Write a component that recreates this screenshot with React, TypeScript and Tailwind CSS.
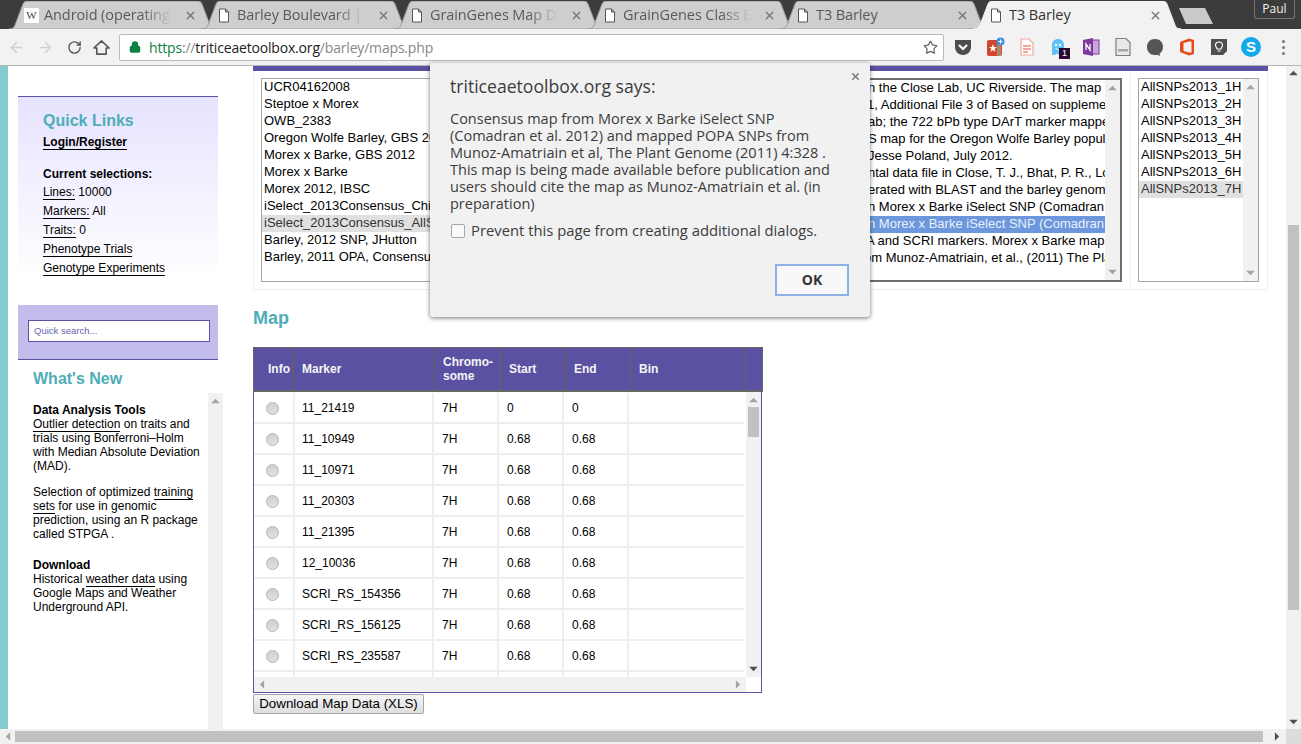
import { ArrowLeft, ArrowRight, RotateCw, Star, X, Lock } from 'lucide-react';

const tabs = [
  { title: 'Android (operating system)', wiki: true },
  { title: 'Barley Boulevard | Genome' },
  { title: 'GrainGenes Map Data' },
  { title: 'GrainGenes Class Browser' },
  { title: 'T3 Barley' },
  { title: 'T3 Barley', active: true },
];

const leftRows = [
  'UCR04162008',
  'Steptoe x Morex',
  'OWB_2383',
  'Oregon Wolfe Barley, GBS 2012',
  'Morex x Barke, GBS 2012',
  'Morex x Barke',
  'Morex 2012, IBSC',
  'iSelect_2013Consensus_Chinese',
  'iSelect_2013Consensus_AllSNPs',
  'Barley, 2012 SNP, JHutton',
  'Barley, 2011 OPA, Consensus',
];

// only the part to the right of the dialog shows, so each row starts where the dialog ends
const middleRows = [
  ['n the Close Lab, UC Riverside. The map is', 'pl-[367px]'],
  ['1, Additional File 3 of Based on supplementary', 'pl-[366px]'],
  ['ab; the 722 bPb type DArT marker mapped', 'pl-[367px]'],
  ['S map for the Oregon Wolfe Barley population', 'pl-[367px]'],
  ['Jesse Poland, July 2012.', 'pl-[367px]'],
  ['ntal data file in Close, T. J., Bhat, P. R., Lonardi', 'pl-[367px]'],
  ['erated with BLAST and the barley genome', 'pl-[367px]'],
  ['n Morex x Barke iSelect SNP (Comadran et al.', 'pl-[367px]'],
  ['n Morex x Barke iSelect SNP (Comadran et al.', 'pl-[367px]'],
  ['A and SCRI markers. Morex x Barke map', 'pl-[365px]'],
  ['om Munoz-Amatriain, et al., (2011) The Plant', 'pl-[363px]'],
];

const markers = [
  ['11_21419', '7H', '0', '0'],
  ['11_10949', '7H', '0.68', '0.68'],
  ['11_10971', '7H', '0.68', '0.68'],
  ['11_20303', '7H', '0.68', '0.68'],
  ['11_21395', '7H', '0.68', '0.68'],
  ['12_10036', '7H', '0.68', '0.68'],
  ['SCRI_RS_154356', '7H', '0.68', '0.68'],
  ['SCRI_RS_156125', '7H', '0.68', '0.68'],
  ['SCRI_RS_235587', '7H', '0.68', '0.68'],
  ['', '', '', ''],
];

function Arrow({ dir, color = '#a3a3a3' }: { dir: 'up' | 'down' | 'left' | 'right'; color?: string }) {
  const pts = { up: '0,6 5,1 10,6', down: '0,1 10,1 5,6', left: '6,0 6,10 1,5', right: '1,0 1,10 6,5' }[dir];
  const size = dir === 'up' || dir === 'down' ? 'w-[9px] h-[6px]' : 'w-[6px] h-[9px]';
  const box = dir === 'up' || dir === 'down' ? '0 0 10 7' : '0 0 7 10';
  return (
    <svg viewBox={box} className={size}>
      <polygon points={pts} fill={color} />
    </svg>
  );
}

function FileIcon() {
  return (
    <svg viewBox="0 0 12 15" className="w-[12px] h-[15px] shrink-0">
      <path d="M1.5 1 H7.5 L10.5 4 V14 H1.5 Z M7.5 1 V4 H10.5" fill="#fff" stroke="#555" strokeWidth="1" />
    </svg>
  );
}

function Tab({ title, wiki, active, first }: { title: string; wiki?: boolean; active?: boolean; first?: boolean }) {
  return (
    <div className={`relative w-[207px] h-[28px] shrink-0 flex items-center ${first ? 'ml-[9px]' : '-ml-[14px]'} ${active ? 'z-10' : ''}`}>
      <svg viewBox="0 0 207 28" className="absolute inset-0 w-[207px] h-[28px]">
        <path
          d="M0 28 C4 28 5 26 6 24 L14 3 C15 1 16 0 18 0 H189 C191 0 192 1 193 3 L201 24 C202 26 203 28 207 28 Z"
          fill={active ? '#f2f2f2' : '#cecece'}
          stroke={active ? '#f2f2f2' : '#9a9a9a'}
          strokeWidth="1"
        />
      </svg>
      <div className="relative flex items-center w-full pl-[15px] pr-[19px]">
        {wiki ? (
          <div className="w-[15px] h-[15px] shrink-0 bg-white text-[#444] text-[11px] leading-[15px] text-center font-['Liberation_Serif',serif]">W</div>
        ) : (
          <div className="w-[15px] shrink-0 flex justify-start pl-[1px]"><FileIcon /></div>
        )}
        <div
          className={`ml-[5px] flex-1 overflow-hidden whitespace-nowrap text-[14.5px] tracking-[-0.1px] ${active ? 'text-[#333]' : 'text-[#5a5a5a]'} ${active || title === 'T3 Barley' ? '' : '[mask-image:linear-gradient(to_right,black_72%,transparent_94%)]'}`}
        >
          {title}
        </div>
        <X size={13} strokeWidth={2.5} className="shrink-0 ml-[4px] text-[#777]" />
      </div>
    </div>
  );
}

function ExtensionIcons() {
  return (
    <div className="flex items-center gap-[12px] ml-[9px]">
      <svg viewBox="0 0 20 20" className="w-[20px] h-[20px]">
        <path d="M2 3 H18 V10 C18 15 14 18 10 18 C6 18 2 15 2 10 Z" fill="#4c4c4c" />
        <path d="M6 8 L10 12 L14 8" fill="none" stroke="#fff" strokeWidth="2.2" />
      </svg>
      <svg viewBox="0 0 20 20" className="w-[20px] h-[20px]">
        <rect x="2" y="3" width="15" height="16" rx="2" fill="#d4462e" />
        <rect x="12" y="3" width="4" height="16" fill="#a98a6a" />
        <path d="M8 7 L9 10 L12 10 L9.6 12 L10.5 15 L8 13 L5.5 15 L6.4 12 L4 10 L7 10 Z" fill="#fff" />
        <circle cx="15.5" cy="4.5" r="4" fill="#3d8fe0" />
        <path d="M13.5 4.5 H17.5 M15.5 2.5 V6.5" stroke="#fff" strokeWidth="1.2" />
      </svg>
      <svg viewBox="0 0 20 20" className="w-[20px] h-[20px]">
        <path d="M4 2 H12 L16 6 V18 H4 Z" fill="#fff" stroke="#f4a79e" strokeWidth="1.2" />
        <path d="M6 9 H14 M6 12 H14 M6 15 H11" stroke="#f28b80" strokeWidth="1.4" />
      </svg>
      <div className="relative w-[20px] h-[20px]">
        <svg viewBox="0 0 20 20" className="w-[20px] h-[20px]">
          <path d="M3 18 V8 C3 4 6 2 9 2 C12 2 15 4 15 8 V18 L12.5 16.5 L10.5 18 L8 16.5 L5.5 18 Z" fill="#5cc4f2" />
          <circle cx="7" cy="8" r="1.2" fill="#fff" />
          <circle cx="11" cy="8" r="1.2" fill="#fff" />
          <path d="M6.5 11 C8 13 10 13 11.5 11" stroke="#fff" fill="none" />
        </svg>
        <div className="absolute left-[10px] top-[11px] w-[11px] h-[11px] bg-[#2a0a33] text-white text-[9px] leading-[11px] text-center font-['Liberation_Sans',sans-serif]">1</div>
      </div>
      <svg viewBox="0 0 20 20" className="w-[20px] h-[20px]">
        <rect x="9" y="3" width="9" height="14" fill="#c9a6dc" stroke="#7a3a9e" />
        <path d="M2 3 L12 1 V19 L2 17 Z" fill="#7a3a9e" />
        <path d="M5 13 V7 L9 13 V7" fill="none" stroke="#fff" strokeWidth="1.3" />
      </svg>
      <svg viewBox="0 0 20 20" className="w-[20px] h-[20px]">
        <path d="M3 1.5 H13 L17 5.5 V18.5 H3 Z" fill="#e8e8e8" stroke="#7d7d7d" strokeWidth="1.2" />
        <rect x="5" y="12" width="10" height="2.5" fill="#a5a5a5" />
      </svg>
      <svg viewBox="0 0 20 20" className="w-[20px] h-[20px]">
        <path d="M10 2 C15 2 18 5.5 18 10 C18 13 16.5 15.5 14.5 16.8 L15 19 L12 17.7 C11.3 17.9 10.7 18 10 18 C5 18 2 14.5 2 10 C2 5.5 5 2 10 2 Z" fill="#555" />
      </svg>
      <svg viewBox="0 0 20 20" className="w-[20px] h-[20px]">
        <path d="M3 5 L12 1.5 L17 3 V17 L12 18.5 L3 15 Z" fill="#e64a19" />
        <path d="M6.5 6 L12 4.5 V15.5 L6.5 14 Z" fill="#f2f2f2" />
        <path d="M12 4.5 H14.5 V15.5 H12 Z" fill="#f2f2f2" />
      </svg>
      <svg viewBox="0 0 20 20" className="w-[20px] h-[20px]">
        <path d="M2 2 H18 V14 L14 18 H2 Z" fill="#4f4f4f" />
        <path d="M10 5 C12 5 13.5 6.5 13.5 8.3 C13.5 10 12 10.5 12 12 H8 C8 10.5 6.5 10 6.5 8.3 C6.5 6.5 8 5 10 5 Z M8.5 14 H11.5" fill="none" stroke="#fff" strokeWidth="1.2" />
      </svg>
      <div className="w-[20px] h-[20px] rounded-full bg-[#12a9e8] text-white text-[15px] font-bold leading-[20px] text-center font-['Liberation_Sans',sans-serif]">S</div>
      <div className="flex flex-col gap-[3px] ml-[9px]">
        <div className="w-[3px] h-[3px] rounded-full bg-[#777]" />
        <div className="w-[3px] h-[3px] rounded-full bg-[#777]" />
        <div className="w-[3px] h-[3px] rounded-full bg-[#777]" />
      </div>
    </div>
  );
}

function ListScrollbar() {
  return (
    <div className="w-[15px] shrink-0 bg-[#f1f1f1] flex flex-col items-center justify-between py-[5px]">
      <Arrow dir="up" />
      <Arrow dir="down" />
    </div>
  );
}

function Sidebar() {
  const link = 'border-b border-black leading-[14px] inline-block';
  return (
    <div className="w-[215px] shrink-0 pt-[30px] pl-[10px] flex flex-col text-[12px] text-black">
      <div className="w-[200px] h-[184px] border-t border-[#5b51a5] bg-gradient-to-b from-[#e6e3fe] to-white pl-[25px] pt-[15px]">
        <div className="text-[16px] font-bold text-[#4fadb8] leading-[18px]">Quick Links</div>
        <div className="mt-[3px] h-[19px] font-bold"><span className={link}>Login/Register</span></div>
        <div className="mt-[13px] font-bold leading-[18px]">Current selections:</div>
        <div className="leading-[19px]"><span className={link}>Lines:</span> 10000</div>
        <div className="leading-[19px]"><span className={link}>Markers:</span> All</div>
        <div className="leading-[19px]"><span className={link}>Traits:</span> 0</div>
        <div className="leading-[19px]"><span className={link}>Phenotype Trials</span></div>
        <div className="leading-[19px]"><span className={link}>Genotype Experiments</span></div>
      </div>
      <div className="mt-[25px] w-[200px] h-[55px] bg-[#c3bdeb] border-b border-[#5b51a5] pl-[10px] pt-[15px]">
        <div className="w-[182px] h-[22px] bg-white border border-[#5b51a5] text-[9.5px] leading-[20px] pl-[5px] text-[#6a5fb0]">Quick search...</div>
      </div>
      <div className="mt-[10px] pl-[15px] text-[16px] font-bold text-[#4fadb8] leading-[18px]">What's New</div>
      <div className="flex-1 flex mt-[5px] min-h-0 pl-[15px]">
        <div className="w-[175px] shrink-0 leading-[14px] pt-[10px]">
          <div className="font-bold">Data Analysis Tools</div>
          <div><span className="border-b border-black">Outlier detection</span> on traits and trials using Bonferroni–Holm with Median Absolute Deviation (MAD).</div>
          <div className="mt-[12px]">Selection of optimized <span className="border-b border-black">training sets</span> for use in genomic prediction, using an R package called STPGA .</div>
          <div className="mt-[17px] font-bold">Download</div>
          <div>Historical <span className="border-b border-black">weather data</span> using Google Maps and Weather Underground API.</div>
        </div>
        <div className="w-[15px] shrink-0 bg-[#f1f1f1] flex justify-center pt-[5px]"><Arrow dir="up" /></div>
      </div>
    </div>
  );
}

function MapTable() {
  const head = 'h-full flex items-center border-r border-[#666648] pl-[8px] shrink-0';
  const cell = 'h-full flex items-center border-r-2 border-[#eeeeee] shrink-0';
  return (
    <div className="mt-[18px] w-[510px] flex flex-col text-[12px]">
      <div className="h-[45px] bg-[#5b51a3] border border-[#666] border-b-2 flex text-[#f4f4f4] font-bold leading-[14px]">
        <div className={`${head} w-[40px] justify-end !pl-0 pr-[3px]`}>Info</div>
        <div className={`${head} w-[141px]`}>Marker</div>
        <div className={`${head} w-[66px]`}>Chromo-<br />some</div>
        <div className={`${head} w-[65px]`}>Start</div>
        <div className={`${head} w-[65px]`}>End</div>
        <div className={`${head} w-[115px]`}>Bin</div>
      </div>
      <div className="w-[509px] border border-t-0 border-[#5b51a5] flex flex-col">
        <div className="flex h-[285px]">
          <div className="w-[490px] overflow-hidden pt-[1px]">
            {markers.map((row, i) => (
              <div key={i} className="h-[31px] flex border-b-2 border-[#eeeeee] text-black">
                <div className="w-[41px] h-full border-r-2 border-[#eeeeee] shrink-0 flex items-center justify-center pr-[3px] pt-[2px]">
                  {i < 9 && <div className="w-[13px] h-[13px] rounded-full border border-[#b4b4b4] bg-gradient-to-b from-[#cfcfcf] to-[#e2e2e2]" />}
                </div>
                <div className={`${cell} w-[139px] pl-[7px]`}>{row[0]}</div>
                <div className={`${cell} w-[65px] pl-[8px]`}>{row[1]}</div>
                <div className={`${cell} w-[65px] pl-[8px]`}>{row[2]}</div>
                <div className={`${cell} w-[65px] pl-[8px]`}>{row[3]}</div>
                <div className="flex-1" />
              </div>
            ))}
          </div>
          <div className="w-[2px] bg-white" />
          <div className="w-[15px] bg-[#f1f1f1] flex flex-col items-center justify-between py-[5px]">
            <div className="flex flex-col items-center">
              <Arrow dir="up" />
              <div className="mt-[4px] w-[11px] h-[30px] bg-[#c1c1c1]" />
            </div>
            <Arrow dir="down" color="#505050" />
          </div>
        </div>
        <div className="h-[15px] flex">
          <div className="w-[492px] bg-[#f1f1f1] flex items-center justify-between px-[5px]">
            <Arrow dir="left" />
            <Arrow dir="right" />
          </div>
        </div>
      </div>
      <button className="mt-[1px] w-[171px] h-[20px] bg-gradient-to-b from-[#f4f4f4] to-[#dedede] border border-[#a6a6a6] rounded-[2px] text-[13.33px] leading-[18px] text-black text-center">
        Download Map Data (XLS)
      </button>
    </div>
  );
}

function AlertDialog() {
  return (
    <div className="absolute left-[430px] top-[63px] w-[440px] h-[254px] bg-[#f1f1f1] rounded-[3px] shadow-[0_1px_4px_rgba(0,0,0,0.55)] text-[#3c3c3c] font-['Open_Sans',sans-serif] pl-[20px] z-20">
      <X size={11} strokeWidth={3} className="absolute right-[9px] top-[8px] text-[#777]" />
      <div className="pt-[11px] text-[17.6px] leading-[24px]">triticeaetoolbox.org says:</div>
      <div className="mt-[12px] w-[410px] text-[14.5px] leading-[17px] whitespace-nowrap">
        Consensus map from Morex x Barke iSelect SNP<br />
        (Comadran et al. 2012) and mapped POPA SNPs from<br />
        Munoz-Amatriain et al, The Plant Genome (2011) 4:328 .<br />
        This map is being made available before publication and<br />
        users should cite the map as Munoz-Amatriain et al. (in<br />
        preparation)
      </div>
      <div className="mt-[10px] flex items-center h-[17px]">
        <div className="ml-[1px] w-[14px] h-[14px] rounded-[2px] border border-[#a8a8a8] bg-[#fafafa]" />
        <div className="ml-[6px] text-[14.8px]">Prevent this page from creating additional dialogs.</div>
      </div>
      <div className="mt-[25px] mr-[21px] flex justify-end">
        <div className="w-[74px] h-[32px] bg-[#f8f8f8] border-2 border-[#8fb0e6] text-[14px] font-bold leading-[28px] text-center text-[#333]">OK</div>
      </div>
    </div>
  );
}

export default function App() {
  return (
    <div className="relative w-[1301px] h-[744px] overflow-hidden flex flex-col bg-white font-['Liberation_Sans',Arial,sans-serif]">
      <div className="h-[29px] shrink-0 bg-[#3c3c3c] flex pt-[1px] font-['Open_Sans',sans-serif] relative">
        {tabs.map((t, i) => (
          <Tab key={i} title={t.title} wiki={t.wiki} active={t.active} first={i === 0} />
        ))}
        <svg viewBox="0 0 36 16" className="ml-[-3px] mt-[7px] w-[36px] h-[16px] shrink-0">
          <path d="M1 0 H27 L35 16 H8 Z" fill="#cacaca" />
        </svg>
        <div className="absolute right-[6px] top-0 w-[41px] h-[19px] border border-t-0 border-[#777] rounded-b-[3px] text-[#eee] text-[12px] leading-[18px] text-center">Paul</div>
      </div>

      <div className="h-[37px] shrink-0 bg-[#f2f2f2] border-b border-[#b5b5b5] flex items-center font-['Open_Sans',sans-serif]">
        <ArrowLeft size={17} strokeWidth={2} className="ml-[8px] text-[#cfcfcf]" />
        <ArrowRight size={17} strokeWidth={2} className="ml-[12px] text-[#cfcfcf]" />
        <RotateCw size={15} strokeWidth={2.2} className="ml-[13px] text-[#555]" />
        <svg viewBox="0 0 18 18" className="ml-[11px] w-[17px] h-[17px]">
          <path d="M9 2 L17 9.5 H14 V16 H4 V9.5 H1 Z" fill="none" stroke="#555" strokeWidth="1.7" strokeLinejoin="round" />
        </svg>
        <div className="ml-[9px] w-[825px] h-[27px] bg-white border border-[#bbbbbb] rounded-[2px] flex items-center pl-[9px] pr-[5px]">
          <Lock size={12} strokeWidth={3} className="text-[#0b8043] fill-[#0b8043]" />
          <div className="ml-[8px] flex-1 text-[14px] tracking-[-0.18px] whitespace-nowrap text-[#888]">
            <span className="text-[#0b8043]">https</span>://<span className="text-[#222]">triticeaetoolbox.org</span>/barley/maps.php
          </div>
          <Star size={15} strokeWidth={2} className="text-[#666]" />
        </div>
        <ExtensionIcons />
      </div>

      <div className="flex-1 min-h-0 flex">
        <div className="w-[8px] shrink-0 bg-[#86cbd0]" />
        <Sidebar />
        <div className="ml-[30px] w-[1015px] shrink-0 flex flex-col">
          <div className="h-[224px] shrink-0 border-t-[5px] border-[#5b51a5] flex flex-col">
            <div className="h-[219px] border border-t-0 border-[#eeeeee] flex text-[13px] text-black">
              <div className="flex-1 min-w-0 pl-[7px] pt-[7px] pb-[7px] flex">
                <div className="w-[240px] shrink-0 border border-[#a6a6a6] border-r-0 overflow-hidden">
                  {leftRows.map((r, i) => (
                    <div key={i} className={`h-[17px] leading-[16px] pl-[2px] whitespace-nowrap ${i === 8 ? 'bg-[#e0e0e0] text-[#333]' : ''}`}>{r}</div>
                  ))}
                </div>
                <div className="flex-1 min-w-0 flex border-2 border-[#6e6e6e] border-l-0 rounded-[1px]">
                  <div className="flex-1 min-w-0 overflow-hidden">
                    {middleRows.map(([text, offset], i) => (
                      <div key={i} className={`h-[17px] leading-[16px] whitespace-nowrap ${offset} ${i === 8 ? 'bg-[#6d97dd] text-[#e8f0fb]' : ''}`}>{text}</div>
                    ))}
                  </div>
                  <ListScrollbar />
                </div>
              </div>
              <div className="w-[137px] shrink-0 border-l border-[#eeeeee] ml-[8px] pl-[7px] pt-[7px] pb-[7px]">
                <div className="h-full w-[121px] border border-[#a6a6a6] flex">
                  <div className="flex-1 min-w-0">
                    {['1H', '2H', '3H', '4H', '5H', '6H', '7H'].map((c) => (
                      <div key={c} className={`h-[17px] leading-[16px] pl-[2px] whitespace-nowrap overflow-hidden ${c === '7H' ? 'bg-[#e0e0e0] text-[#333]' : ''}`}>AllSNPs2013_{c}</div>
                    ))}
                  </div>
                  <ListScrollbar />
                </div>
              </div>
            </div>
          </div>
          <div className="mt-[17px] text-[18px] font-bold text-[#4fadb8] leading-[22px]">Map</div>
          <MapTable />
        </div>
        <div className="ml-auto w-[15px] shrink-0 bg-[#f1f1f1] flex flex-col items-center pt-[4px]">
          <Arrow dir="up" color="#505050" />
          <div className="mt-[149px] w-[11px] h-[385px] bg-[#c1c1c1]" />
          <div className="mt-auto mb-[4px]"><Arrow dir="down" color="#505050" /></div>
        </div>
      </div>

      <div className="h-[15px] shrink-0 bg-[#f1f1f1] flex items-center">
        <div className="w-[15px] flex justify-center"><Arrow dir="left" color="#a3a3a3" /></div>
        <div className="w-[1248px] h-[11px] bg-[#c1c1c1]" />
        <div className="w-[23px] flex justify-center pl-[5px]"><Arrow dir="right" color="#505050" /></div>
        <div className="w-[15px] h-full bg-[#dcdcdc]" />
      </div>

      <AlertDialog />
    </div>
  );
}
